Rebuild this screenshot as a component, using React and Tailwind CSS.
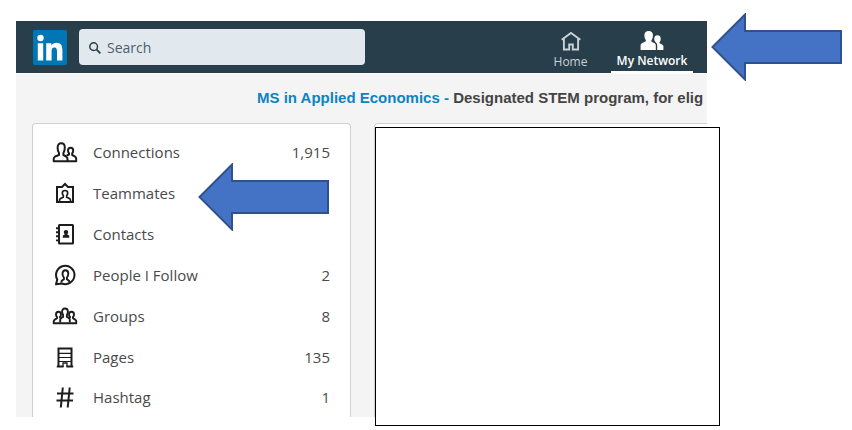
import React from 'react';

const ConnectionsIcon = () => (
  <svg width="26" height="22" viewBox="0 0 26 22" fill="none" stroke="currentColor" strokeWidth="2" strokeLinejoin="round">
    <path d="M7 11C5.900 9.500 5.600 7.800 5.600 5.500 5.600 2.900 7 1.300 9.200 1.300s3.600 1.600 3.600 4.200c0 2.300-.3 4-1.400 5.500v2l2.800 1.500c1 .6 1.300 1.300 1.300 2.500v2.300H1.700V17c0-1.200.4-1.900 1.400-2.500L7 13z" />
    <path d="M14.600 13.700l2.400-1.200v-1.200c-.8-.8-1-1.700-1-2.700 0-1.700 1-2.800 2.600-2.800s2.600 1.100 2.600 2.800c0 1-.2 1.900-1 2.700v1.700l2.600 1.300c1 .6 1.400 1.200 1.400 2.400v2.600h-8.700" />
  </svg>
);

const TeammatesIcon = () => (
  <svg width="24" height="24" viewBox="0 0 24 24" fill="none" stroke="currentColor" strokeWidth="2">
    <path d="M4 5h5l3-3 3 3h5v15H4z" />
    <path d="M6.500 19.500v-1.300c0-.9.300-1.400 1.100-1.800l2.700-1.300v-1.500c-.7-.8-1-1.600-1-2.500 0-1.600 1-2.600 2.700-2.600s2.700 1 2.700 2.600c0 .9-.3 1.700-1 2.500v1.500l2.700 1.300c.8.400 1.100.9 1.100 1.800v1.300" strokeWidth="1.700" />
  </svg>
);

const ContactsIcon = () => (
  <svg width="24" height="24" viewBox="0 0 24 24" fill="none" stroke="currentColor" strokeWidth="2">
    <rect x="6" y="2" width="14" height="18.500" rx="0.500" />
    <path d="M3 5.200h4M3 9.200h4M3 13.300h4M3 17.400h4" strokeWidth="1.900" />
    <path d="M13 7c1.400 0 2.200.9 2.200 2.200 0 .8-.3 1.500-.8 1.900v.7l1.800.7v2.200H9.800v-2.200l1.800-.7v-.7c-.5-.4-.8-1.100-.8-1.900C10.800 7.900 11.600 7 13 7z" fill="currentColor" stroke="none" />
  </svg>
);

const FollowIcon = () => (
  <svg width="24" height="24" viewBox="0 0 24 24" fill="none" stroke="currentColor" strokeWidth="2">
    <path d="M3 20.300L4.300 15.500A9.200 9.200 0 1 1 9 19.500z" strokeLinejoin="round" />
    <path d="M8.300 18.500c0-1.300.4-1.900 1.300-2.400l1.300-.8v-1.600C9.900 12.600 9.500 11.300 9.500 9.700c0-2.200 1-3.500 2.900-3.500s2.900 1.300 2.900 3.500c0 1.600-.4 2.900-1.400 4v1.600l1.300.8c.9.500 1.300 1.100 1.300 2.400" strokeWidth="1.900" />
  </svg>
);

const GroupsIcon = () => (
  <svg width="26" height="22" viewBox="0 0 26 22" fill="none" stroke="currentColor" strokeWidth="2" strokeLinejoin="round">
    <path d="M8.200 16.500v-2.800c0-1 .4-1.500 1.200-1.900l1.700-.9V8.800c-.8-.9-1-1.900-1-3 0-2.200 1.100-3.300 2.900-3.300s2.900 1.100 2.900 3.300c0 1.100-.2 2.100-1 3v2.100l1.700.9c.8.4 1.200.9 1.200 1.900v2.800" strokeWidth="1.900" />
    <path d="M8 12v-1.200c.8-.8 1-1.500 1-2.400C9 6.700 8 5.700 6.500 5.700S4 6.700 4 8.400c0 .9.200 1.600 1 2.400v1.400l-2.200 1.400c-.8.5-1.100 1-1.100 1.900v1.700h22.600v-1.700c0-.9-.3-1.400-1.100-1.900L21 12.200v-1.400c.8-.8 1-1.500 1-2.400 0-1.700-1-2.700-2.500-2.700S17 6.700 17 8.400c0 .9.200 1.600 1 2.400V12" strokeWidth="1.900" />
  </svg>
);

const PagesIcon = () => (
  <svg width="24" height="24" viewBox="0 0 24 24" fill="none" stroke="currentColor" strokeWidth="2">
    <path d="M5.500 20V2.500h13V20M3.800 20.500h6.700M13.500 20.500h6.700" />
    <path d="M6 7.300h12M6 11.500h12M6 15.500h12" strokeWidth="1.200" />
    <path d="M10 21v-4h4v4" strokeWidth="1.300" />
  </svg>
);

const HashtagIcon = () => (
  <svg width="24" height="24" viewBox="0 0 24 24" fill="none" stroke="currentColor" strokeWidth="2">
    <path d="M9.800 1.500L7.800 21.500M16.700 1.500l-2 20M4 7.500h16.500M3.500 14.500H20" />
  </svg>
);

const HomeIcon = () => (
  <svg width="20" height="20" viewBox="0 0 20 20" fill="none" stroke="currentColor" strokeWidth="1.900">
    <path d="M.7 8.800L10 2l9.300 6.800" />
    <path d="M2.900 7.800v10.700h5.300v-5h3.600v5h5.300V7.800" />
  </svg>
);

const NetworkIcon = () => (
  <svg width="26" height="20" viewBox="0 0 26 20" fill="currentColor">
    <path d="M9.500 0c3 0 4.500 1.800 4.500 4.500 0 2.200-.5 4-1.600 5.300v1.500l2.900 1.400c1.300.7 1.700 1.500 1.700 2.800V20H1v-4.500c0-1.300.5-2.100 1.800-2.800l3.700-1.900V9.600C5.400 8.300 5 6.600 5 4.500 5 1.800 6.500 0 9.500 0z" />
    <path d="M18.800 4.500c2.300 0 3.400 1.400 3.400 3.600 0 1.500-.4 2.800-1.200 3.800V13l2.500 1.300c1.100.6 1.500 1.300 1.500 2.500V20h-6.500v-4.800c0-1.700-.6-2.900-2-3.700l-.1-.3c-.8-1-1-2-1-3.300 0-2.100 1.200-3.400 3.400-3.400z" />
  </svg>
);

const SearchIcon = () => (
  <svg width="12" height="12" viewBox="0 0 14 14" fill="none" stroke="currentColor" strokeWidth="1.700">
    <circle cx="5.400" cy="5.400" r="4.500" />
    <path d="M8.700 8.700l4.600 4.600" strokeWidth="2.200" />
  </svg>
);

const Logo = () => (
  <svg width="34" height="35" viewBox="0 0 34 35">
    <rect width="34" height="35" rx="2" fill="#0077b5" />
    <g fill="#fff">
      <circle cx="7.500" cy="8" r="3.200" />
      <path d="M4.800 13.200h5.400v17.300H4.800zM13.200 13.200h5.200v2.400c.9-1.600 2.600-2.800 5-2.800 4.800 0 6 3 6 7.700v10h-5.400v-9c0-2.300-.3-4.100-2.600-4.100-2.300 0-2.800 1.800-2.800 4v9.100h-5.400z" />
    </g>
  </svg>
);

const Arrow = ({ className = '' }) => (
  <svg width="131" height="68" viewBox="0 0 131 68" className={`absolute ${className}`} aria-hidden="true">
    <path d="M1.500 34L34 1.500V18h96v32H34v16.500z" fill="#4472c4" stroke="#2f528f" strokeWidth="2" />
  </svg>
);

const items = [
  { label: 'Connections', count: '1,915', Icon: ConnectionsIcon },
  { label: 'Teammates', Icon: TeammatesIcon, marked: true },
  { label: 'Contacts', Icon: ContactsIcon },
  { label: 'People I Follow', count: '2', Icon: FollowIcon },
  { label: 'Groups', count: '8', Icon: GroupsIcon },
  { label: 'Pages', count: '135', Icon: PagesIcon },
  { label: 'Hashtag', count: '1', Icon: HashtagIcon },
];

const Header = () => (
  <header className="relative flex h-[52px] items-stretch bg-[#283e4a] pl-[17px] pr-[14px]">
    <a href="#" aria-label="LinkedIn" className="flex items-center">
      <Logo />
    </a>
    <label className="my-2 ml-3 flex w-[286px] items-center gap-1.5 rounded-sm bg-[#e1e9ee] px-2.5 pt-px text-[#283e4a]">
      <SearchIcon />
      <input
        type="search"
        aria-label="Search"
        placeholder="Search"
        className="min-w-0 flex-1 bg-transparent text-sm outline-none placeholder:text-[#4c5f6b]"
      />
    </label>
    <nav className="ml-auto flex text-xs">
      <a href="#" className="flex w-[81px] flex-col items-center pt-2.5 text-[#c7d1d8]">
        <HomeIcon />
        <span className="pt-px leading-5">Home</span>
      </a>
      <a
        href="#"
        aria-current="page"
        className="flex w-[82px] flex-col items-center whitespace-nowrap border-b-2 border-white pt-2.5 font-semibold text-white"
      >
        <NetworkIcon />
        <span className="pt-px leading-5">My Network</span>
      </a>
    </nav>
    <Arrow className="-top-2 left-full ml-1" />
  </header>
);

const Sidebar = () => (
  <aside className="w-[319px] shrink-0 rounded-t-sm border border-b-0 border-[#d0d0d0] bg-white pt-2">
    <ul>
      {items.map(({ label, count, Icon, marked }) => (
        <li key={label} className="relative h-[41px] last:h-[39px]">
          <a href="#" className="flex h-full items-center pl-[19px] pr-5 text-[15px] text-[#4a4a4a]">
            <span className="flex w-[26px] justify-center text-[#1c1c1c]">
              <Icon />
            </span>
            <span className="ml-[15px]">{label}</span>
            {count && <span className="ml-auto">{count}</span>}
          </a>
          {marked && <Arrow className="-top-2.5 right-[21px]" />}
        </li>
      ))}
    </ul>
  </aside>
);

export default function App() {
  return (
    <div className="min-h-screen bg-white pl-4 pr-[145px] pt-[21px] font-['Open_Sans','Noto_Sans',sans-serif]">
      <Header />
      <main className="border-t border-white bg-[#f4f4f4]">
        <p className="overflow-hidden whitespace-nowrap pb-[13px] pl-[241px] pt-3 font-['Liberation_Sans',Arial,sans-serif] text-[15px] font-bold leading-6 text-[#444]">
          <a href="#" className="text-[#0e83c1]">MS in Applied Economics -</a> Designated STEM program, for elig
        </p>
        <div className="flex gap-[23px] pl-4">
          <Sidebar />
          <section className="relative flex-1 rounded-tl-sm border-l border-t border-[#d0d0d0] bg-white">
            <div className="absolute -bottom-[9px] -right-[13px] left-0 top-[3px] border border-black bg-white" />
          </section>
        </div>
      </main>
    </div>
  );
}
